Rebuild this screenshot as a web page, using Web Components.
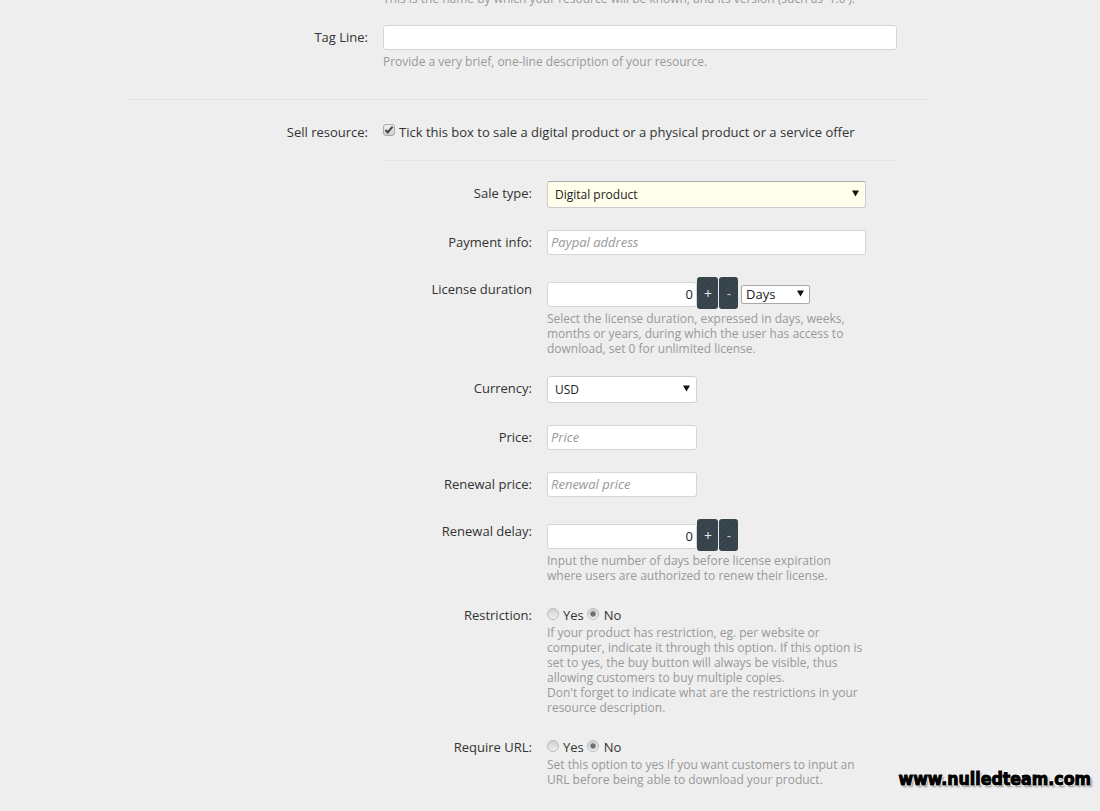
<!DOCTYPE html>
<html>
<head>
<meta charset="utf-8">
<title>Resource form</title>
<style>
    html, body { margin: 0; height: 100%; overflow: hidden; background: #eee; }
    body { font: 13px/15px "Open Sans", "Liberation Sans", sans-serif; color: #333; }
</style>
</head>
<body>
<resource-form>
    <form-hint class="clipped">This is the name by which your resource will be known, and its version (such as '1.0').</form-hint>

    <form-field label="Tag Line:" width="514">
        <text-field></text-field>
        <form-hint slot="help" gap="5">Provide a very brief, one-line description of your resource.</form-hint>
    </form-field>

    <form-rule wide></form-rule>

    <form-field label="Sell resource:" width="514" class="sell">
        <check-line checked>Tick this box to sale a digital product or a physical product or a service offer</check-line>
        <form-rule slot="help"></form-rule>
        <sale-options slot="help">
            <form-field nested label="Sale type:">
                <drop-select highlight>Digital product</drop-select>
            </form-field>
            <form-field nested label="Payment info:">
                <text-field placeholder="Paypal address"></text-field>
            </form-field>
            <form-field nested label="License duration">
                <number-stepper value="0"><drop-select mini>Days</drop-select></number-stepper>
                <form-hint slot="help" gap="3">Select the license duration, expressed in days, weeks, months or years, during which the user has access to download, set 0 for unlimited license.</form-hint>
            </form-field>
            <form-field nested label="Currency:">
                <drop-select style="width:150px">USD</drop-select>
            </form-field>
            <form-field nested label="Price:">
                <text-field placeholder="Price" style="width:150px"></text-field>
            </form-field>
            <form-field nested label="Renewal price:">
                <text-field placeholder="Renewal price" style="width:150px"></text-field>
            </form-field>
            <form-field nested label="Renewal delay:">
                <number-stepper value="0"></number-stepper>
                <form-hint slot="help" gap="3">Input the number of days before license expiration where users are authorized to renew their license.</form-hint>
            </form-field>
            <form-field nested label="Restriction:">
                <yes-no></yes-no>
                <form-hint slot="help" gap="3">If your product has restriction, eg. per website or computer, indicate it through this option. If this option is set to yes, the buy button will always be visible, thus allowing customers to buy multiple copies.<br>Don't forget to indicate what are the restrictions in your resource description.</form-hint>
            </form-field>
            <form-field nested label="Require URL:">
                <yes-no></yes-no>
                <form-hint slot="help" gap="3">Set this option to yes if you want customers to input an URL before being able to download your product.</form-hint>
            </form-field>
        </sale-options>
    </form-field>
</resource-form>
<team-stamp>www.nulledteam.com</team-stamp>

<script>
class ResourceForm extends HTMLElement {
    constructor() {
        super();
        this.attachShadow({ mode: 'open' }).innerHTML = `
            <style>
                :host {
                    display: block;
                    width: 800px;
                    margin: -9px 0 0 128px;
                }
                ::slotted(.clipped) {
                    margin: 0 0 19px 255px;
                    width: 514px;
                }
            </style>
            <slot></slot>
        `;
    }
}

class FormField extends HTMLElement {
    constructor() {
        super();
        const nested = this.hasAttribute('nested');
        this.attachShadow({ mode: 'open' }).innerHTML = `
            <style>
                :host {
                    display: grid;
                    grid-template-columns: ${nested ? '149px 319px' : '240px ' + (this.getAttribute('width') || 514) + 'px'};
                    column-gap: 15px;
                    margin-bottom: 22px;
                }
                .label {
                    text-align: right;
                    padding-top: 5px;
                }
                .control {
                    min-width: 0;
                }
            </style>
            <div class="label">${this.getAttribute('label')}</div>
            <div class="control">
                <slot></slot>
                <slot name="help"></slot>
            </div>
        `;
    }
}

class FormHint extends HTMLElement {
    constructor() {
        super();
        this.attachShadow({ mode: 'open' }).innerHTML = `
            <style>
                :host {
                    display: block;
                    color: #999;
                    font-size: 12px;
                    line-height: 15px;
                }
            </style>
            <slot></slot>
        `;
        const gap = this.getAttribute('gap');
        if (gap) {
            this.style.marginTop = (gap - 1) + 'px';
            this.style.marginBottom = gap === '3' ? '-2px' : '1px';
        }
    }
}

class FormRule extends HTMLElement {
    constructor() {
        super();
        this.attachShadow({ mode: 'open' }).innerHTML = `
            <style>
                :host {
                    display: block;
                    height: 1px;
                    background: #e4e4e4;
                    margin: 20px 0;
                }
                :host([wide]) {
                    margin: 29px 0 20px;
                }
            </style>
        `;
    }
}

class TextField extends HTMLElement {
    constructor() {
        super();
        const placeholder = this.getAttribute('placeholder') || '';
        this.attachShadow({ mode: 'open' }).innerHTML = `
            <style>
                :host {
                    display: block;
                    box-sizing: border-box;
                    height: 25px;
                    padding: 4px 3px;
                    background: #fff;
                    border: 1px solid #d5d5d5;
                    border-radius: 3px;
                    color: #999;
                    font-style: italic;
                }
            </style>
            ${placeholder}
        `;
    }
}

class DropSelect extends HTMLElement {
    constructor() {
        super();
        this.attachShadow({ mode: 'open' }).innerHTML = `
            <style>
                :host {
                    display: flex;
                    align-items: center;
                    justify-content: space-between;
                    box-sizing: border-box;
                    height: 27px;
                    padding: 0 6px 0 7px;
                    background: #fff;
                    border: 1px solid #d0d0d0;
                    border-radius: 3px;
                    color: #222;
                    font-size: 12px;
                }
                :host([highlight]) {
                    background: #ffffec;
                    border-color: #ccc;
                    border-top-color: #aaa;
                }
                :host([mini]) {
                    width: 69px;
                    height: 19px;
                    padding: 0 5px 0 4px;
                    margin: 8px 0 0 3px;
                    border-color: #a8a8a8;
                    border-radius: 2px;
                    font-size: 13px;
                }
                svg { flex: none; margin-top: -2px; }
            </style>
            <slot></slot>
            <svg width="7" height="7" viewBox="0 0 7 7"><path d="M0 .5h7L3.5 6.5z" fill="#111"/></svg>
        `;
    }
}

class NumberStepper extends HTMLElement {
    constructor() {
        super();
        this.attachShadow({ mode: 'open' }).innerHTML = `
            <style>
                :host {
                    display: flex;
                    align-items: flex-start;
                }
                .value {
                    box-sizing: border-box;
                    width: 150px;
                    height: 25px;
                    margin-top: 5px;
                    padding: 4px 3px;
                    text-align: right;
                    background: #fff;
                    border: 1px solid #d5d5d5;
                    border-radius: 3px;
                    color: #222;
                }
                button {
                    box-sizing: border-box;
                    height: 32px;
                    padding: 0;
                    border: 0;
                    border-radius: 3px;
                    color: #e6e9ea;
                    font: inherit;
                    font-size: 14px;
                    background: repeating-linear-gradient(135deg, #36424a 0 2px, #3b474f 2px 4px);
                }
                .plus { width: 21px; margin-right: 1px; padding-left: 1px; }
                .minus { width: 19px; color: #b9c0c4; padding-left: 1px; }
            </style>
            <div class="value">${this.getAttribute('value')}</div>
            <button class="plus" type="button">+</button>
            <button class="minus" type="button">-</button>
            <slot></slot>
        `;
    }
}

class CheckLine extends HTMLElement {
    constructor() {
        super();
        this.attachShadow({ mode: 'open' }).innerHTML = `
            <style>
                :host {
                    display: flex;
                    gap: 4px;
                    padding-top: 5px;
                    white-space: nowrap;
                }
                .box {
                    box-sizing: border-box;
                    width: 12px;
                    height: 12px;
                    margin-top: -1px;
                    background: linear-gradient(#f0f0f0, #d0d0d0);
                    border: 1px solid #a9a9a9;
                    border-radius: 3px;
                    display: flex;
                }
            </style>
            <span class="box">
                <svg width="10" height="10" viewBox="0 0 10 10"><path d="M1.5 5l2.2 2.4L8.6 1.6" fill="none" stroke="#444" stroke-width="2"/></svg>
            </span>
            <slot></slot>
        `;
    }
}

class YesNo extends HTMLElement {
    constructor() {
        super();
        this.attachShadow({ mode: 'open' }).innerHTML = `
            <style>
                :host {
                    display: flex;
                    padding-top: 5px;
                    line-height: 15px;
                }
                .dot {
                    box-sizing: border-box;
                    width: 12px;
                    height: 12px;
                    border: 1px solid #bcbcbc;
                    border-radius: 50%;
                    background: linear-gradient(#d0d0d0, #f0f0f0);
                }
                .dot.on {
                    background: radial-gradient(circle, #707070 0 2.2px, transparent 3.2px), linear-gradient(#d0d0d0, #f0f0f0);
                }
                .text { margin-left: 4px; }
                .yes { margin-right: 3px; }
                .no { margin-left: 5px; }
            </style>
            <span class="dot"></span><span class="text yes">Yes</span>
            <span class="dot on"></span><span class="text no">No</span>
        `;
    }
}

class SaleOptions extends HTMLElement {
    constructor() {
        super();
        this.attachShadow({ mode: 'open' }).innerHTML = `
            <style>
                :host {
                    display: block;
                    margin-left: -15px;
                }
                ::slotted(*) { margin-left: 15px; }
            </style>
            <slot></slot>
        `;
    }
}

class TeamStamp extends HTMLElement {
    constructor() {
        super();
        this.attachShadow({ mode: 'open' }).innerHTML = `
            <style>
                :host {
                    position: absolute;
                    right: 9px;
                    top: 768px;
                    font: bold 17.6px/22px "DejaVu Sans", sans-serif;
                    font-stretch: condensed;
                    color: #000;
                    -webkit-text-stroke: 1px #000;
                    text-shadow: 1px 1px 0 #fff, -1px -1px 0 #fff, 1px -1px 0 #fff, -1px 1px 0 #fff, 2px 2px 2px #888;
                    white-space: nowrap;
                }
            </style>
            <slot></slot>
        `;
    }
}

customElements.define('resource-form', ResourceForm);
customElements.define('form-field', FormField);
customElements.define('form-hint', FormHint);
customElements.define('form-rule', FormRule);
customElements.define('text-field', TextField);
customElements.define('drop-select', DropSelect);
customElements.define('number-stepper', NumberStepper);
customElements.define('check-line', CheckLine);
customElements.define('yes-no', YesNo);
customElements.define('sale-options', SaleOptions);
customElements.define('team-stamp', TeamStamp);
</script>
</body>
</html>
